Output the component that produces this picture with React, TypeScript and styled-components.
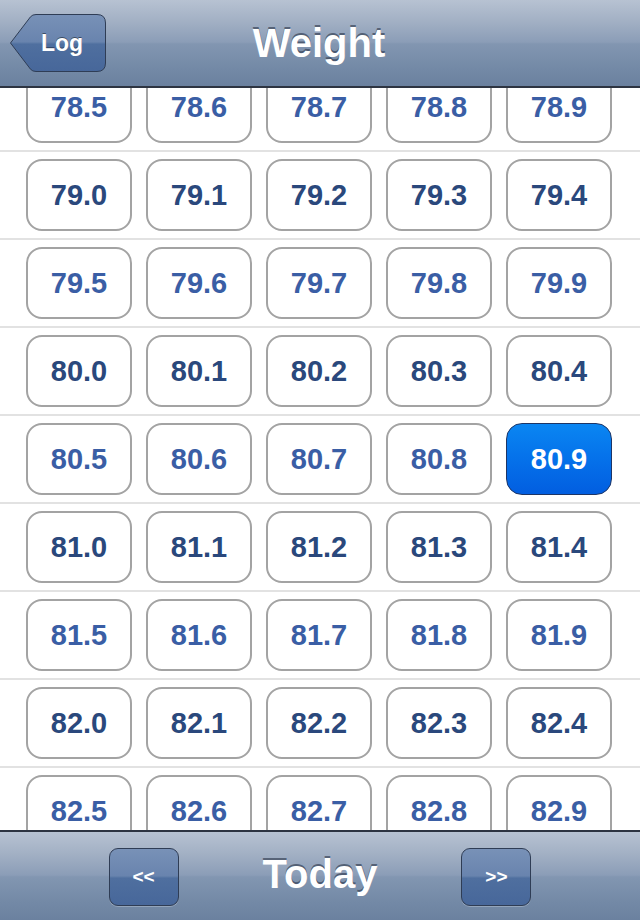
import React, { useState } from 'react';
import styled, { createGlobalStyle, css } from 'styled-components';

const GlobalStyle = createGlobalStyle`
  html, body {
    margin: 0;
    padding: 0;
    background: #fff;
  }
  body {
    font-family: "Liberation Sans", Arial, Helvetica, sans-serif;
  }
`;

// bar gradient shared by top and bottom bars
const barGradient = css`
  background: linear-gradient(
    to bottom,
    #b7c2d2 0%,
    #a2b0c4 25%,
    #8b9db7 49%,
    #8296b1 51%,
    #7389a6 80%,
    #6b819f 100%
  );
`;

const buttonGradient = css`
  background: linear-gradient(
    to bottom,
    #7891b7 0%,
    #6984ae 48%,
    #4f6f9f 52%,
    #47679a 100%
  );
`;

const Screen = styled.div`
  width: 640px;
  height: 920px;
  display: flex;
  flex-direction: column;
  overflow: hidden;
  background: #fff;
`;

const NavBar = styled.header`
  ${barGradient};
  height: 86px;
  flex: none;
  border-top: 1px solid #cfd6e0;
  border-bottom: 2px solid #2d3441;
  box-sizing: content-box;
  margin-top: -1px;
  display: grid;
  grid-template-columns: 1fr auto 1fr;
  align-items: center;
  padding: 0 10px;
  position: relative;
  z-index: 1;
`;

const Title = styled.h1`
  margin: 0 2px 0 0;
  font-size: 40px;
  font-weight: bold;
  color: #fff;
  text-shadow: 0 -2px 0 rgba(40, 50, 70, 0.6);
`;

const BackButton = styled.button`
  justify-self: start;
  position: relative;
  width: 96px;
  height: 58px;
  padding: 0 0 0 8px;
  border: none;
  background: none;
  color: #fff;
  font-family: inherit;
  font-size: 23px;
  font-weight: bold;
  text-shadow: 0 -1px 0 rgba(0, 0, 0, 0.45);
  display: flex;
  align-items: center;
  justify-content: center;
  cursor: pointer;

  svg {
    position: absolute;
    left: 0;
    top: 0;
  }

  span {
    position: relative;
  }
`;

const Content = styled.main`
  flex: 1;
  overflow: hidden;
`;

const List = styled.div`
  margin-top: -24px;
`;

const Row = styled.div`
  display: grid;
  grid-template-columns: repeat(5, 106px);
  column-gap: 14px;
  padding: 7px 28px 7px 26px;
  border-bottom: 2px solid #e2e2e2;
`;

const Cell = styled.button<{ $tone: 'dark' | 'light'; $selected?: boolean }>`
  height: 72px;
  border-radius: 16px;
  border: 2px solid #a3a3a3;
  background: #fff;
  font-family: inherit;
  font-size: 29px;
  font-weight: bold;
  color: ${({ $tone }) => ($tone === 'dark' ? '#2a487c' : '#3a5ea5')};
  cursor: pointer;
  padding: 0;

  ${({ $selected }) =>
    $selected &&
    css`
      border: 1.5px solid #1d3566;
      background: linear-gradient(to bottom, #0a86f2 0%, #0571ea 50%, #025ee0 100%);
      color: #fff;
    `}
`;

const BottomBar = styled.footer`
  ${barGradient};
  height: 86px;
  flex: none;
  border-top: 2px solid #2d3441;
  display: flex;
  align-items: center;
  justify-content: center;
  gap: 84px;
  padding-top: 2px;
  box-sizing: content-box;
`;

const PageButton = styled.button`
  ${buttonGradient};
  width: 70px;
  height: 58px;
  border-radius: 9px;
  border: 1px solid #2f3d55;
  color: #fff;
  font-family: inherit;
  font-size: 19px;
  font-weight: bold;
  padding: 0;
  cursor: pointer;
  box-shadow: 0 1px 0 rgba(255, 255, 255, 0.25);
`;

const Today = styled.div`
  font-size: 40px;
  font-weight: bold;
  color: #fff;
  text-shadow: 0 -2px 0 rgba(40, 50, 70, 0.6);
  margin-bottom: 6px;
`;

const BackShape = () => (
  <svg width="96" height="58" viewBox="0 0 96 58">
    <defs>
      <linearGradient id="backFill" x1="0" y1="0" x2="0" y2="1">
        <stop offset="0" stopColor="#7891b7" />
        <stop offset="0.48" stopColor="#6984ae" />
        <stop offset="0.52" stopColor="#4f6f9f" />
        <stop offset="1" stopColor="#47679a" />
      </linearGradient>
    </defs>
    <path
      d="M0.5 29 L20.5 2.8 Q22.5 0.5 26 0.5 L87 0.5 Q95.5 0.5 95.5 9 L95.5 49 Q95.5 57.5 87 57.5 L26 57.5 Q22.5 57.5 20.5 55.2 Z"
      fill="url(#backFill)"
      stroke="#2f3d55"
      strokeWidth="1"
    />
  </svg>
);

const rows: number[] = [];
for (let w = 785; w <= 825; w += 5) rows.push(w);

const App: React.FC = () => {
  const [selected, setSelected] = useState('80.9');

  return (
    <>
      <GlobalStyle />
      <Screen>
        <NavBar>
          <BackButton>
            <BackShape />
            <span>Log</span>
          </BackButton>
          <Title>Weight</Title>
          <div />
        </NavBar>
        <Content>
          <List>
            {rows.map((start) => (
              <Row key={start}>
                {[0, 1, 2, 3, 4].map((i) => {
                  const value = ((start + i) / 10).toFixed(1);
                  return (
                    <Cell
                      key={value}
                      $tone={start % 10 === 0 ? 'dark' : 'light'}
                      $selected={value === selected}
                      onClick={() => setSelected(value)}
                    >
                      {value}
                    </Cell>
                  );
                })}
              </Row>
            ))}
          </List>
        </Content>
        <BottomBar>
          <PageButton>&lt;&lt;</PageButton>
          <Today>Today</Today>
          <PageButton>&gt;&gt;</PageButton>
        </BottomBar>
      </Screen>
    </>
  );
};

export default App;
